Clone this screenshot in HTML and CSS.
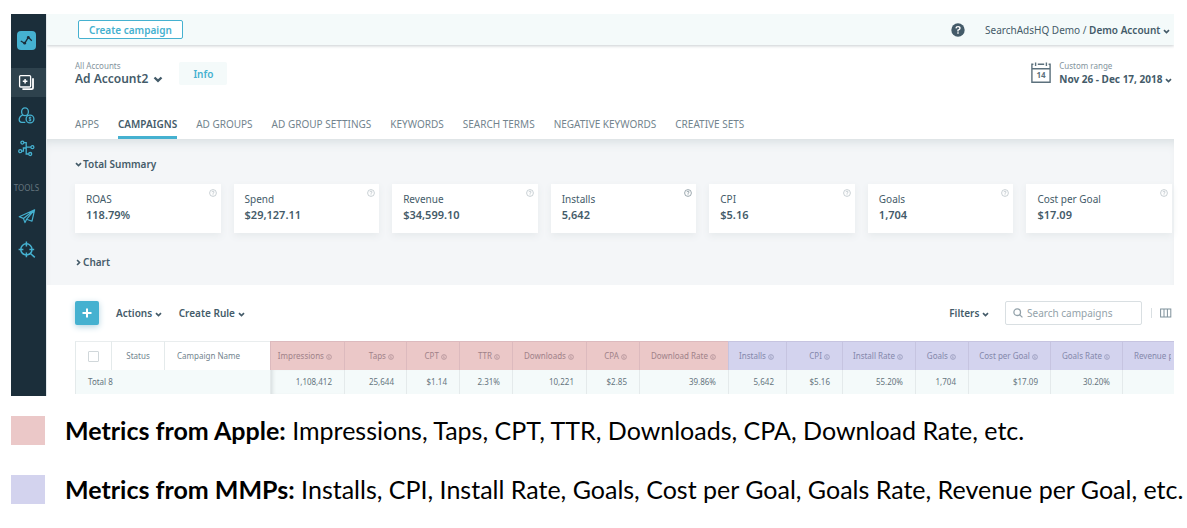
FILE: index.html
```html
<!DOCTYPE html>
<html lang="en">
<head>
<meta charset="utf-8">
<title>Campaigns</title>
<link rel="stylesheet" href="styles.css">
</head>
<body>

<!-- shared icons -->
<svg class="defs" width="0" height="0">
  <symbol id="chevron" viewBox="0 0 8 6"><path d="M1 1.3 L4 4.2 L7 1.3" fill="none" stroke="currentColor" stroke-width="2"/></symbol>
  <symbol id="help" viewBox="0 0 8 8"><circle cx="4" cy="4" r="3.4" fill="none" stroke="currentColor" stroke-width=".7"/><path d="M2.9 3.2 Q3 2.2 4 2.2 Q5.1 2.2 5.1 3.1 Q5.1 3.7 4 4.3 V4.9 M4 5.4 V6.1" fill="none" stroke="currentColor" stroke-width=".7"/></symbol>
  <symbol id="info" viewBox="0 0 8 8"><circle cx="4" cy="4" r="3.2" fill="none" stroke="currentColor" stroke-width=".8"/><path d="M4 2 V2.8 M3.4 3.6 H4 V6" fill="none" stroke="currentColor" stroke-width=".9"/></symbol>
</svg>

<div class="app">
  <nav class="sidebar">
    <a class="logo" href="#" aria-label="Home">
      <svg width="19" height="19" viewBox="0 0 19 19"><rect width="19" height="19" rx="4" fill="#45b1d0"/><path d="M3.8 10 L7.7 12.3 L11.3 6.3 L14.8 9.7" fill="none" stroke="#1b2e3a" stroke-width="1.3"/><circle cx="7.7" cy="12.2" r="1.4" fill="#1b2e3a"/><circle cx="11.3" cy="6.4" r="1.4" fill="#1b2e3a"/></svg>
    </a>
    <a class="side-item active" href="#" aria-label="Campaigns">
      <svg width="17" height="17" viewBox="0 0 17 17" fill="none" stroke="currentColor" stroke-width="1.3"><rect x="1.6" y="1.6" width="11" height="11.4" rx="1"/><path d="M15 4.2 V13.6 Q15 15.2 13.4 15.2 H4.4" stroke-width="1.8"/><path d="M7.1 5 V9.6 M4.8 7.3 H9.4" stroke-width="1.5"/></svg>
    </a>
    <a class="side-item" href="#" aria-label="Users">
      <svg width="17" height="17" viewBox="0 0 17 17" fill="none" stroke="currentColor" stroke-width="1.3"><ellipse cx="7" cy="4.7" rx="3.4" ry="3.9"/><path d="M4.8 7.8 Q1.2 9.4 1.2 12.6 Q1.2 15.4 3.6 15.4 H7.3 M9 7.9 L10 8.4"/><circle cx="12" cy="12" r="3.9"/><path d="M13.3 10.7 Q12 9.8 11.1 10.6 Q10.6 11.5 12 12 Q13.5 12.5 12.9 13.4 Q12 14.2 10.7 13.3 M12 9.6 V14.4" stroke-width=".9"/></svg>
    </a>
    <a class="side-item" href="#" aria-label="Automation">
      <svg width="17" height="17" viewBox="0 0 17 17" fill="none" stroke="currentColor" stroke-width="1.3"><circle cx="4.4" cy="2.6" r="1.5"/><circle cx="14.4" cy="7.2" r="1.5"/><circle cx="2.2" cy="11.2" r="1.5"/><circle cx="12.2" cy="14" r="1.5"/><path d="M5.9 2.6 H8.2 V14 H10.7 M8.2 7.2 H12.9 M3.7 11.2 H5.4 V8 H8.2"/></svg>
    </a>
    <div class="side-title">TOOLS</div>
    <a class="side-item" href="#" aria-label="Send">
      <svg width="18" height="17" viewBox="0 0 18 17" fill="none" stroke="currentColor" stroke-width="1.2" stroke-linejoin="round"><path d="M1.2 8.8 L16.6 1.8 L14 13.2 L8.6 11.2 L7 14.6 L5.4 10.4 Z M5.4 10.4 L16.6 1.8 L8.6 11.2"/></svg>
    </a>
    <a class="side-item" href="#" aria-label="Discover">
      <svg width="18" height="18" viewBox="0 0 18 18" fill="none" stroke="currentColor" stroke-width="1.5"><circle cx="8.4" cy="8.4" r="5.6"/><path d="M8.4 .6 V5.4 M8.4 11.4 V16.2 M.6 8.4 H5.4 M11.4 8.4 H16.2 M12.2 12.2 L16.8 16.4"/></svg>
    </a>
  </nav>

  <main class="main">
    <header class="topbar">
      <button class="create">Create campaign</button>
      <div class="user">
        <svg width="14" height="14" viewBox="0 0 14 14"><circle cx="7" cy="7" r="6.7" fill="#445b69"/><path d="M5 5.4 Q5.1 3.6 7 3.6 Q9 3.6 9 5.2 Q9 6.3 7 7.2 V8.4 M7 9.3 V10.7" fill="none" stroke="#fff" stroke-width="1.4"/></svg>
        <a href="#">SearchAdsHQ Demo / <b>Demo Account</b> <svg width="7" height="5"><use href="#chevron"/></svg></a>
      </div>
    </header>

    <section class="account">
      <div class="account-row">
        <div>
          <div class="caption">All Accounts</div>
          <button class="account-name">Ad Account2 <svg width="10" height="7"><use href="#chevron"/></svg></button>
        </div>
        <button class="info-btn">Info</button>
        <div class="range">
          <svg width="20" height="21" viewBox="0 0 20 21" fill="none" stroke="#5c717d" stroke-width="1.4"><path d="M2.4 2.3 H.9 V20.2 H19.1 V2.3 H17.6 M6.8 2.3 H13.2 M.9 6.8 H19.1 M4.6 .6 V4 M15.4 .6 V4"/><text x="10" y="16" text-anchor="middle">14</text></svg>
          <div>
            <div class="caption">Custom range</div>
            <button class="range-btn">Nov 26 - Dec 17, 2018 <svg width="7" height="5"><use href="#chevron"/></svg></button>
          </div>
        </div>
      </div>
      <nav class="tabs">
        <a href="#">APPS</a>
        <a href="#" class="current">CAMPAIGNS</a>
        <a href="#">AD GROUPS</a>
        <a href="#">AD GROUP SETTINGS</a>
        <a href="#">KEYWORDS</a>
        <a href="#">SEARCH TERMS</a>
        <a href="#">NEGATIVE KEYWORDS</a>
        <a href="#">CREATIVE SETS</a>
      </nav>
    </section>

    <section class="summary">
      <button class="toggle"><svg width="7" height="5"><use href="#chevron"/></svg>Total Summary</button>
      <div class="cards">
        <div class="card"><span>ROAS</span><b>118.79%</b><svg class="help"><use href="#help"/></svg></div>
        <div class="card"><span>Spend</span><b>$29,127.11</b><svg class="help"><use href="#help"/></svg></div>
        <div class="card"><span>Revenue</span><b>$34,599.10</b><svg class="help"><use href="#help"/></svg></div>
        <div class="card"><span>Installs</span><b>5,642</b><svg class="help dark"><use href="#help"/></svg></div>
        <div class="card"><span>CPI</span><b>$5.16</b><svg class="help"><use href="#help"/></svg></div>
        <div class="card"><span>Goals</span><b>1,704</b><svg class="help"><use href="#help"/></svg></div>
        <div class="card"><span>Cost per Goal</span><b>$17.09</b><svg class="help"><use href="#help"/></svg></div>
      </div>
      <button class="toggle closed"><svg width="7" height="5"><use href="#chevron"/></svg>Chart</button>
    </section>

    <section class="toolbar">
      <button class="add" aria-label="Add"><svg width="10" height="10" viewBox="0 0 10 10"><path d="M5 .5 V9.5 M.5 5 H9.5" stroke="#fff" stroke-width="2"/></svg></button>
      <button class="menu">Actions <svg width="7" height="5"><use href="#chevron"/></svg></button>
      <button class="menu">Create Rule <svg width="7" height="5"><use href="#chevron"/></svg></button>
      <button class="menu filters">Filters <svg width="7" height="5"><use href="#chevron"/></svg></button>
      <label class="search">
        <svg width="10" height="10" viewBox="0 0 10 10" fill="none" stroke="#93a2aa" stroke-width="1.3"><circle cx="4.2" cy="4.2" r="3.3"/><path d="M6.6 6.6 L9.4 9.4"/></svg>
        <input type="text" placeholder="Search campaigns" aria-label="Search campaigns">
      </label>
      <button class="columns" aria-label="Columns"><svg width="12" height="10" viewBox="0 0 12 10" fill="none" stroke="#7f919b"><rect x=".6" y="1" width="10.2" height="8"/><path d="M4 1 V9 M7.4 1 V9"/></svg></button>
    </section>

    <table class="grid">
      <colgroup>
        <col class="w36"><col class="w53"><col class="w106">
        <col class="w74"><col class="w62"><col class="w53"><col class="w53"><col class="w74"><col class="w53"><col class="w89">
        <col class="w58"><col class="w56"><col class="w73"><col class="w53"><col class="w82"><col class="w72"><col>
      </colgroup>
      <thead>
        <tr>
          <th class="check"><input type="checkbox" aria-label="Select all"></th>
          <th class="mid">Status</th>
          <th class="left">Campaign Name</th>
          <th class="apple">Impressions <svg><use href="#info"/></svg></th>
          <th class="apple">Taps <svg><use href="#info"/></svg></th>
          <th class="apple">CPT <svg><use href="#info"/></svg></th>
          <th class="apple">TTR <svg><use href="#info"/></svg></th>
          <th class="apple">Downloads <svg><use href="#info"/></svg></th>
          <th class="apple">CPA <svg><use href="#info"/></svg></th>
          <th class="apple">Download Rate <svg><use href="#info"/></svg></th>
          <th class="mmp">Installs <svg><use href="#info"/></svg></th>
          <th class="mmp">CPI <svg><use href="#info"/></svg></th>
          <th class="mmp">Install Rate <svg><use href="#info"/></svg></th>
          <th class="mmp">Goals <svg><use href="#info"/></svg></th>
          <th class="mmp">Cost per Goal <svg><use href="#info"/></svg></th>
          <th class="mmp">Goals Rate <svg><use href="#info"/></svg></th>
          <th class="mmp last"><div>Revenue per Goal</div></th>
        </tr>
      </thead>
      <tbody>
        <tr>
          <td class="total" colspan="3">Total 8</td>
          <td class="first">1,108,412</td>
          <td>25,644</td>
          <td>$1.14</td>
          <td>2.31%</td>
          <td>10,221</td>
          <td>$2.85</td>
          <td>39.86%</td>
          <td>5,642</td>
          <td>$5.16</td>
          <td>55.20%</td>
          <td>1,704</td>
          <td>$17.09</td>
          <td>30.20%</td>
          <td></td>
        </tr>
      </tbody>
    </table>
  </main>
</div>

<ul class="legend">
  <li><i class="apple"></i><p><b>Metrics from Apple:</b> Impressions, Taps, CPT, TTR, Downloads, CPA, Download Rate, etc.</p></li>
  <li><i class="mmp"></i><p><b>Metrics from MMPs:</b> Installs, CPI, Install Rate, Goals, Cost per Goal, Goals Rate, Revenue per Goal, etc.</p></li>
</ul>

</body>
</html>
```
FILE: styles.css
```css
*{
  box-sizing: border-box;
}

body{
  margin: 0;
  padding: 14px 13px 0 11px;
  background: #fff;
  color: #445b69;
  font-family: "Noto Sans", "Open Sans", sans-serif;
  font-size: 10px;
  line-height: 14px;
}

a{
  color: inherit;
  text-decoration: none;
}

b{
  font-weight: 600;
}

button{
  padding: 0;
  border: 0;
  background: none;
  color: inherit;
  font: inherit;
  font-weight: 600;
  white-space: nowrap;
}

svg{
  flex: none;
}

.defs{
  position: absolute;
}

.app{
  display: flex;
}

/* sidebar */
.sidebar{
  flex: none;
  width: 35px;
  background: #1b2e3a;
  color: #45b1d0;
}

.sidebar a{
  display: flex;
  align-items: center;
  justify-content: center;
  padding-right: 4px;
}

.sidebar .logo{
  height: 54px;
  padding-bottom: 2px;
}

.sidebar .side-item{
  height: 33px;
}

.sidebar .active{
  height: 29px;
  margin-bottom: 2px;
  background: #2e424d;
  color: #fff;
}

.side-title{
  padding: 17px 4px 6px 0;
  color: #65757e;
  font-size: 8px;
  line-height: 12px;
  text-align: center;
}

/* top part */
.main{
  flex: 1;
  min-width: 0;
  padding-bottom: 2px;
  border-left: 1px solid #e3e8eb;
}

.topbar{
  position: relative;
  display: flex;
  align-items: center;
  justify-content: space-between;
  height: 31px;
  padding: 0 4px 0 31px;
  background: #f4fafa;
  box-shadow: 0 1px 3px #c9cdd0;
  clip-path: inset(0 0 -6px 0);
}

.create{
  height: 19px;
  padding: 0 10px;
  border: 1px solid #45b1d0;
  border-radius: 2px;
  background: #fff;
  color: #45b1d0;
}

.user{
  display: flex;
  align-items: center;
  gap: 20px;
}

.account{
  padding: 15px 2px 0 28px;
}

.account-row{
  display: flex;
  align-items: flex-start;
}

.caption{
  color: #84949d;
  font-size: 8px;
  line-height: 12px;
}

.account-name{
  display: block;
  font-size: 12px;
}

.account-name svg{
  margin-left: 2px;
}

.info-btn{
  height: 23px;
  margin: 2px 0 0 16px;
  padding: 0 14px;
  border-radius: 2px;
  background: #f4fafa;
  color: #45b1d0;
}

.range{
  display: flex;
  gap: 8px;
  margin-left: auto;
}

.range > svg{
  margin-top: 2px;
}

.range text{
  fill: #5c717d;
  stroke: none;
  font-size: 8px;
  font-weight: 700;
}

.range-btn{
  display: block;
  font-weight: 700;
}

.tabs{
  display: flex;
  gap: 19px;
  margin-top: 31px;
  color: #72848e;
}

.tabs a{
  height: 22px;
}

.tabs .current{
  border-bottom: 3px solid #45b1d0;
  color: #445b69;
  font-weight: 600;
}

/* summary */
.summary{
  height: 146px;
  padding: 18px 2px 0 28px;
  background: #f4f6f8;
  box-shadow: inset 0 9px 12px -7px #d3dadd;
}

.toggle{
  display: flex;
  align-items: center;
  gap: 1px;
}

.toggle.closed svg{
  transform: rotate(-90deg);
}

.cards{
  display: grid;
  grid-template-columns: repeat(7, 1fr);
  gap: 13px;
  margin: 13px 0 22px;
}

.card{
  position: relative;
  height: 49px;
  padding: 7px 11px;
  background: #fff;
  box-shadow: 0 3px 7px #e6eaec;
}

.card span,
.card b{
  display: block;
  line-height: 16px;
}

.card b{
  font-size: 11px;
}

.help{
  position: absolute;
  top: 5px;
  right: 4px;
  width: 8px;
  height: 8px;
  color: #b3bdc3;
}

.help.dark{
  color: #72848e;
}

/* toolbar */
.toolbar{
  display: flex;
  align-items: center;
  height: 56px;
  padding: 0 2px 0 28px;
}

.add{
  display: flex;
  align-items: center;
  justify-content: center;
  width: 24px;
  height: 24px;
  border-radius: 2px;
  background: #45b1d0;
  box-shadow: 0 2px 6px #b5d5e2;
}

.menu{
  margin-left: 17px;
}

.filters{
  margin-left: auto;
}

.search{
  display: flex;
  align-items: center;
  gap: 4px;
  width: 137px;
  height: 24px;
  margin-left: 16px;
  padding: 0 7px;
  border: 1px solid #d9dfe2;
  border-radius: 2px;
}

.search input{
  width: 100%;
  min-width: 0;
  padding: 0;
  border: 0;
  outline: 0;
  font: inherit;
}

.search input::placeholder{
  color: #93a2aa;
}

.columns{
  display: flex;
  margin-left: 9px;
  padding-left: 8px;
  border-left: 1px solid #d9dfe2;
}

/* table */
.grid{
  width: calc(100% - 28px);
  margin-left: 28px;
  border-collapse: separate;
  border-spacing: 0;
  table-layout: fixed;
  color: #65757e;
  font-size: 8px;
  line-height: 12px;
}

.w36{ width: 36px; }
.w53{ width: 53px; }
.w56{ width: 56px; }
.w58{ width: 58px; }
.w62{ width: 62px; }
.w72{ width: 72px; }
.w73{ width: 73px; }
.w74{ width: 74px; }
.w82{ width: 82px; }
.w89{ width: 89px; }
.w106{ width: 106px; }

.grid th,
.grid td{
  padding: 0 12px 0 0;
  border-left: 1px solid #e4eaeb;
  text-align: right;
  white-space: nowrap;
}

.grid th{
  height: 29px;
  border-top: 1px solid #e9edee;
  color: #72848e;
  font-weight: 400;
}

.grid th svg{
  width: 6px;
  height: 6px;
  vertical-align: -1px;
}

.grid .apple,
.grid .mmp{
  border-color: rgba(90, 70, 110, .1);
}

.apple{
  background: #ebc8c8;
}

.mmp{
  background: #d3d3ee;
}

.grid .apple{
  color: #a08289;
}

.grid .mmp{
  color: #8488ab;
}

.grid .mid{
  padding: 0;
  text-align: center;
}

.grid .left{
  padding-left: 12px;
  text-align: left;
}

.grid .check{
  padding: 0;
  text-align: center;
}

.grid .check input{
  appearance: none;
  display: block;
  width: 11px;
  height: 11px;
  margin: 0 auto;
  border: 1px solid #d0d7da;
  border-radius: 1px;
  background: #fff;
}

.grid .last{
  padding: 0 3px 0 11px;
}

.last div{
  overflow: hidden;
  text-align: left;
}

.grid td{
  height: 24px;
  background: #f4fafa;
}

.grid td.total{
  padding-left: 12px;
  text-align: left;
}

.grid td.first{
  box-shadow: inset 4px 0 4px -3px #cfd6d8;
}

/* legend */
.legend{
  margin: 20px 0 0;
  padding: 0;
  list-style: none;
  color: #000;
  font-family: Lato, sans-serif;
  font-size: 25px;
  line-height: 29px;
}

.legend li{
  display: flex;
  gap: 20px;
  margin-bottom: 30px;
}

.legend i{
  flex: none;
  width: 34px;
  height: 29px;
}

.legend p{
  margin: 0;
  white-space: nowrap;
}

.legend b{
  font-weight: 700;
}
```
